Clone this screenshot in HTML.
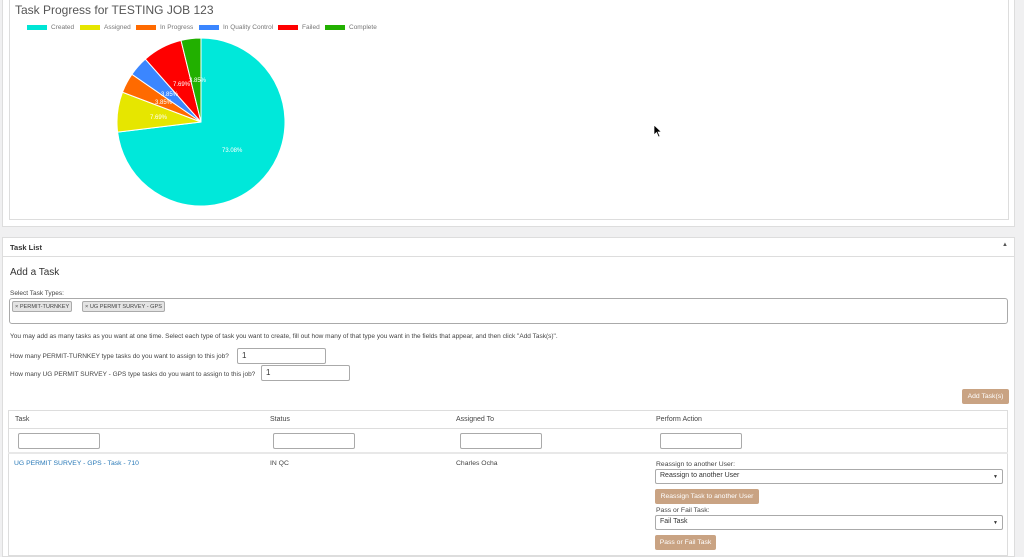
<!DOCTYPE html>
<html><head><style>
*{box-sizing:border-box;margin:0;padding:0}
body{width:1024px;height:555px;overflow:hidden;background:#f0f0f1;font-family:"Liberation Sans",sans-serif;font-size:7px;color:#444;position:relative}
.abs{position:absolute;white-space:nowrap}
.panel{background:#fff;border:1px solid #ddd}
.inp{position:absolute;border:1px solid #aaa;border-radius:2px;background:#fff;height:16px;font-size:8px;padding:2px 4px;color:#333;white-space:nowrap}
.btn{position:absolute;background:#c9a383;color:#fff;border-radius:2px;font-size:6.8px;text-align:center;white-space:nowrap}
.leg{display:inline-block;width:20px;height:5px;margin-right:4px;vertical-align:middle}
.lg{position:absolute;top:24px;font-size:6.5px;color:#777;white-space:nowrap}
.tag{position:absolute;top:301px;height:11px;border:1px solid #aaa;background:#e4e4e4;border-radius:2px;font-size:5.6px;padding:1px 2px;white-space:nowrap;line-height:8px}
</style></head><body>
<div class="abs panel" style="left:2px;top:-1px;width:1013px;height:228px"></div>
<div class="abs" style="left:9px;top:-1px;width:1000px;height:221px;border:1px solid #ddd;background:#fff"></div>
<div class="abs" style="left:15px;top:3px;font-size:12px;color:#555">Task Progress for TESTING JOB 123</div>
<div class="lg" style="left:27px"><span class="leg" style="background:#00e5d5"></span>Created</div>
<div class="lg" style="left:80px"><span class="leg" style="background:#e6e600"></span>Assigned</div>
<div class="lg" style="left:136px"><span class="leg" style="background:#ff6a00"></span>In Progress</div>
<div class="lg" style="left:199px"><span class="leg" style="background:#3b86ff"></span>In Quality Control</div>
<div class="lg" style="left:278px"><span class="leg" style="background:#ff0000"></span>Failed</div>
<div class="lg" style="left:325px"><span class="leg" style="background:#22b000"></span>Complete</div>
<svg class="abs" style="left:0;top:0" width="400" height="220">
<g stroke="#fff" stroke-width="1">
<path d="M201,122 L201,38 A84,84 0 1 1 117.6,132.1 Z" fill="#00e8da"/>
<path d="M201,122 L117.6,132.1 A84,84 0 0 1 122.5,92.2 Z" fill="#e6e600"/>
<path d="M201,122 L122.5,92.2 A84,84 0 0 1 131.9,74.3 Z" fill="#ff6a00"/>
<path d="M201,122 L131.9,74.3 A84,84 0 0 1 145.3,59.1 Z" fill="#3b86ff"/>
<path d="M201,122 L145.3,59.1 A84,84 0 0 1 181,40.4 Z" fill="#ff0000"/>
<path d="M201,122 L181,40.4 A84,84 0 0 1 201,38 Z" fill="#22b000"/>
</g>
<g fill="#fff" font-size="6" font-family="Liberation Sans">
<text x="222" y="152">73.08%</text><text x="150" y="119">7.69%</text>
<text x="155" y="104">3.85%</text><text x="161" y="96">3.85%</text>
<text x="173" y="86">7.69%</text><text x="189" y="82">3.85%</text>
</g></svg>
<svg class="abs" style="left:653px;top:124px" width="10" height="14"><path d="M1,1 L1,11 L3.5,8.5 L5.5,13 L7,12.3 L5,8 L8.5,8 Z" fill="#000" stroke="#fff" stroke-width=".7"/></svg>

<div class="abs panel" style="left:2px;top:237px;width:1013px;height:320px"></div>
<div class="abs" style="left:2px;top:256px;width:1013px;height:1px;background:#ddd"></div>
<div class="abs" style="left:10px;top:243px;font-size:7.5px;font-weight:bold;color:#333">Task List</div>
<div class="abs" style="left:1002px;top:242px;font-size:6px;color:#555">▲</div>
<div class="abs" style="left:10px;top:267px;font-size:10px;color:#333">Add a Task</div>
<div class="abs" style="left:10px;top:290px;font-size:6.5px">Select Task Types:</div>
<div class="abs" style="left:9px;top:298px;width:999px;height:26px;border:1px solid #aaa;border-radius:3px"></div>
<div class="tag" style="left:12px">× PERMIT-TURNKEY</div>
<div class="tag" style="left:82px">× UG PERMIT SURVEY - GPS</div>
<div class="abs" style="left:10px;top:333px;font-size:6.5px">You may add as many tasks as you want at one time. Select each type of task you want to create, fill out how many of that type you want in the fields that appear, and then click "Add Task(s)".</div>
<div class="abs" style="left:10px;top:353px;font-size:6.5px">How many PERMIT-TURNKEY type tasks do you want to assign to this job?</div>
<div class="inp" style="left:237px;top:348px;width:89px">1</div>
<div class="abs" style="left:10px;top:371px;font-size:6.5px">How many UG PERMIT SURVEY - GPS type tasks do you want to assign to this job?</div>
<div class="inp" style="left:261px;top:365px;width:89px">1</div>
<div class="btn" style="left:962px;top:389px;width:47px;height:15px;line-height:15px">Add Task(s)</div>
<div class="abs" style="left:8px;top:410px;width:1000px;height:146px;border:1px solid #ddd"></div>
<div class="abs" style="left:8px;top:428px;width:1000px;height:1px;background:#ddd"></div>
<div class="abs" style="left:8px;top:452px;width:1000px;height:2px;background:#e8e8e8"></div>
<div class="abs" style="left:15px;top:416px;font-size:7px">Task</div>
<div class="abs" style="left:270px;top:416px;font-size:7px">Status</div>
<div class="abs" style="left:456px;top:416px;font-size:7px">Assigned To</div>
<div class="abs" style="left:656px;top:416px;font-size:7px">Perform Action</div>
<div class="inp" style="left:18px;top:433px;width:82px"></div>
<div class="inp" style="left:273px;top:433px;width:82px"></div>
<div class="inp" style="left:460px;top:433px;width:82px"></div>
<div class="inp" style="left:660px;top:433px;width:82px"></div>
<div class="abs" style="left:14px;top:460px;font-size:6.8px;color:#2a7ab8">UG PERMIT SURVEY - GPS - Task - 710</div>
<div class="abs" style="left:270px;top:460px;font-size:6.8px">IN QC</div>
<div class="abs" style="left:456px;top:460px;font-size:6.8px">Charles Ocha</div>
<div class="abs" style="left:656px;top:461px;font-size:6.8px">Reassign to another User:</div>
<div class="inp" style="left:655px;top:469px;width:348px;height:15px;font-size:7px">Reassign to another User<span style="position:absolute;right:4px;font-size:5px;top:4px">▼</span></div>
<div class="btn" style="left:655px;top:489px;width:104px;height:15px;line-height:15px">Reassign Task to another User</div>
<div class="abs" style="left:656px;top:507px;font-size:6.8px">Pass or Fail Task:</div>
<div class="inp" style="left:655px;top:515px;width:348px;height:15px;font-size:7px">Fail Task<span style="position:absolute;right:4px;font-size:5px;top:4px">▼</span></div>
<div class="btn" style="left:655px;top:535px;width:61px;height:15px;line-height:15px">Pass or Fail Task</div>
</body></html>
